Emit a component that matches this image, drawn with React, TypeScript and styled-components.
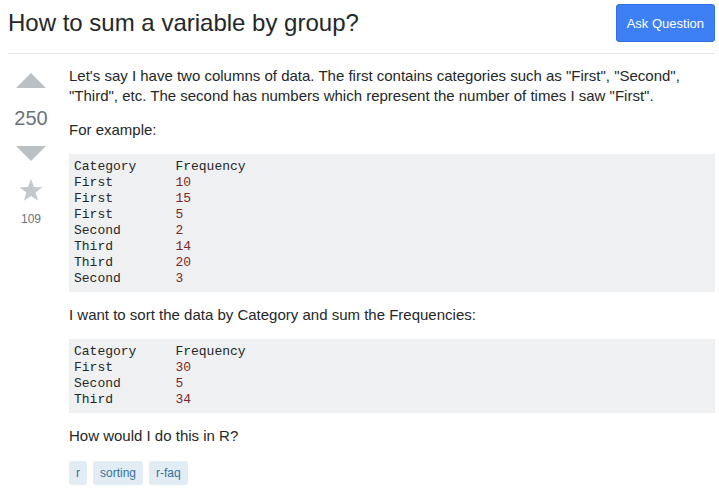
import React from "react";
import styled, { createGlobalStyle } from "styled-components";

const Global = createGlobalStyle`
  html, body { margin: 0; padding: 0; background: #fff; }
  body { font-family: "Liberation Sans", Arial, sans-serif; color: #242729; }
`;

const Page = styled.div`
  padding: 0 4px 0 8px;
`;

const Header = styled.header`
  display: flex;
  align-items: center;
  justify-content: space-between;
  padding: 4px 0 11px;
  border-bottom: 1px solid #e4e6e8;
`;

const Title = styled.h1`
  margin: 0;
  font-size: 24px;
  font-weight: 400;
  line-height: 30px;
  color: #242729;
`;

const AskButton = styled.button`
  height: 38px;
  padding: 0 10px;
  border: 1px solid #2f6fe0;
  border-radius: 3px;
  background: #3d80f5;
  color: #fff;
  font-family: "Liberation Sans", Arial, sans-serif;
  font-size: 13px;
  cursor: pointer;
`;

const Post = styled.div`
  display: flex;
  padding-top: 12px;
`;

const VoteCell = styled.div`
  width: 46px;
  margin-right: 15px;
  display: flex;
  flex-direction: column;
  align-items: center;
  flex-shrink: 0;
`;

const Arrow = styled.svg<{ $top?: number }>`
  display: block;
  margin-top: ${(p) => p.$top ?? 0}px;
`;

const Score = styled.div`
  font-size: 20px;
  line-height: 26px;
  color: #6a737c;
  margin: 17px 0 15px;
`;

const FavCount = styled.div`
  font-size: 12px;
  line-height: 14px;
  color: #6a737c;
  margin-top: 9px;
`;

const Body = styled.div`
  flex: 1;
  min-width: 0;
`;

const P = styled.p<{ $tight?: boolean }>`
  margin: 0 0 ${(p) => (p.$tight ? 14 : 15)}px;
  font-size: 15px;
  line-height: 19.5px;
`;

const Pre = styled.pre`
  margin: 0 0 13px;
  padding: 5px;
  background: #eff0f1;
  font-family: "Liberation Mono", "Courier New", monospace;
  font-size: 13px;
  line-height: 16px;
  color: #242729;
`;

const Lit = styled.span`
  color: #7d2727;
`;

const Tags = styled.div`
  display: flex;
  gap: 6px;
  margin-top: 15px;
`;

const Tag = styled.a`
  display: inline-block;
  height: 24px;
  line-height: 24px;
  padding: 0 7px;
  border-radius: 3px;
  background: #e1ecf4;
  color: #39739d;
  font-size: 12px;
  text-decoration: none;
`;

type Row = [string, string];

const CodeTable = ({ rows }: { rows: Row[] }) => (
  <Pre>
    {"Category     Frequency\n"}
    {rows.map(([c, f], i) => (
      <React.Fragment key={i}>
        {c.padEnd(13, " ")}
        <Lit>{f}</Lit>
        {i < rows.length - 1 ? "\n" : ""}
      </React.Fragment>
    ))}
  </Pre>
);

const data1: Row[] = [
  ["First", "10"],
  ["First", "15"],
  ["First", "5"],
  ["Second", "2"],
  ["Third", "14"],
  ["Third", "20"],
  ["Second", "3"],
];

const data2: Row[] = [
  ["First", "30"],
  ["Second", "5"],
  ["Third", "34"],
];

export default function App() {
  return (
    <Page>
      <Global />
      <Header>
        <Title>How to sum a variable by group?</Title>
        <AskButton>Ask Question</AskButton>
      </Header>
      <Post>
        <VoteCell>
          <Arrow width="30" height="15" viewBox="0 0 30 15" $top={7}>
            <polygon points="0,15 30,15 15,0" fill="#bbc0c4" />
          </Arrow>
          <Score>250</Score>
          <Arrow width="30" height="15" viewBox="0 0 30 15">
            <polygon points="0,0 30,0 15,15" fill="#bbc0c4" />
          </Arrow>
          <Arrow width="24" height="24" viewBox="0 0 24 24" $top={18}>
            <polygon
              points="12,0 14.9,8.1 23.5,8.3 16.6,13.5 19.1,21.8 12,16.9 4.9,21.8 7.4,13.5 0.5,8.3 9.1,8.1"
              fill="#c4c8cc"
            />
          </Arrow>
          <FavCount>109</FavCount>
        </VoteCell>
        <Body>
          <P>
            Let's say I have two columns of data. The first contains categories such as "First",
            "Second", "Third", etc. The second has numbers which represent the number of times I
            saw "First".
          </P>
          <P $tight>For example:</P>
          <CodeTable rows={data1} />
          <P>I want to sort the data by Category and sum the Frequencies:</P>
          <CodeTable rows={data2} />
          <P>How would I do this in R?</P>
          <Tags>
            <Tag href="#">r</Tag>
            <Tag href="#">sorting</Tag>
            <Tag href="#">r-faq</Tag>
          </Tags>
        </Body>
      </Post>
    </Page>
  );
}
